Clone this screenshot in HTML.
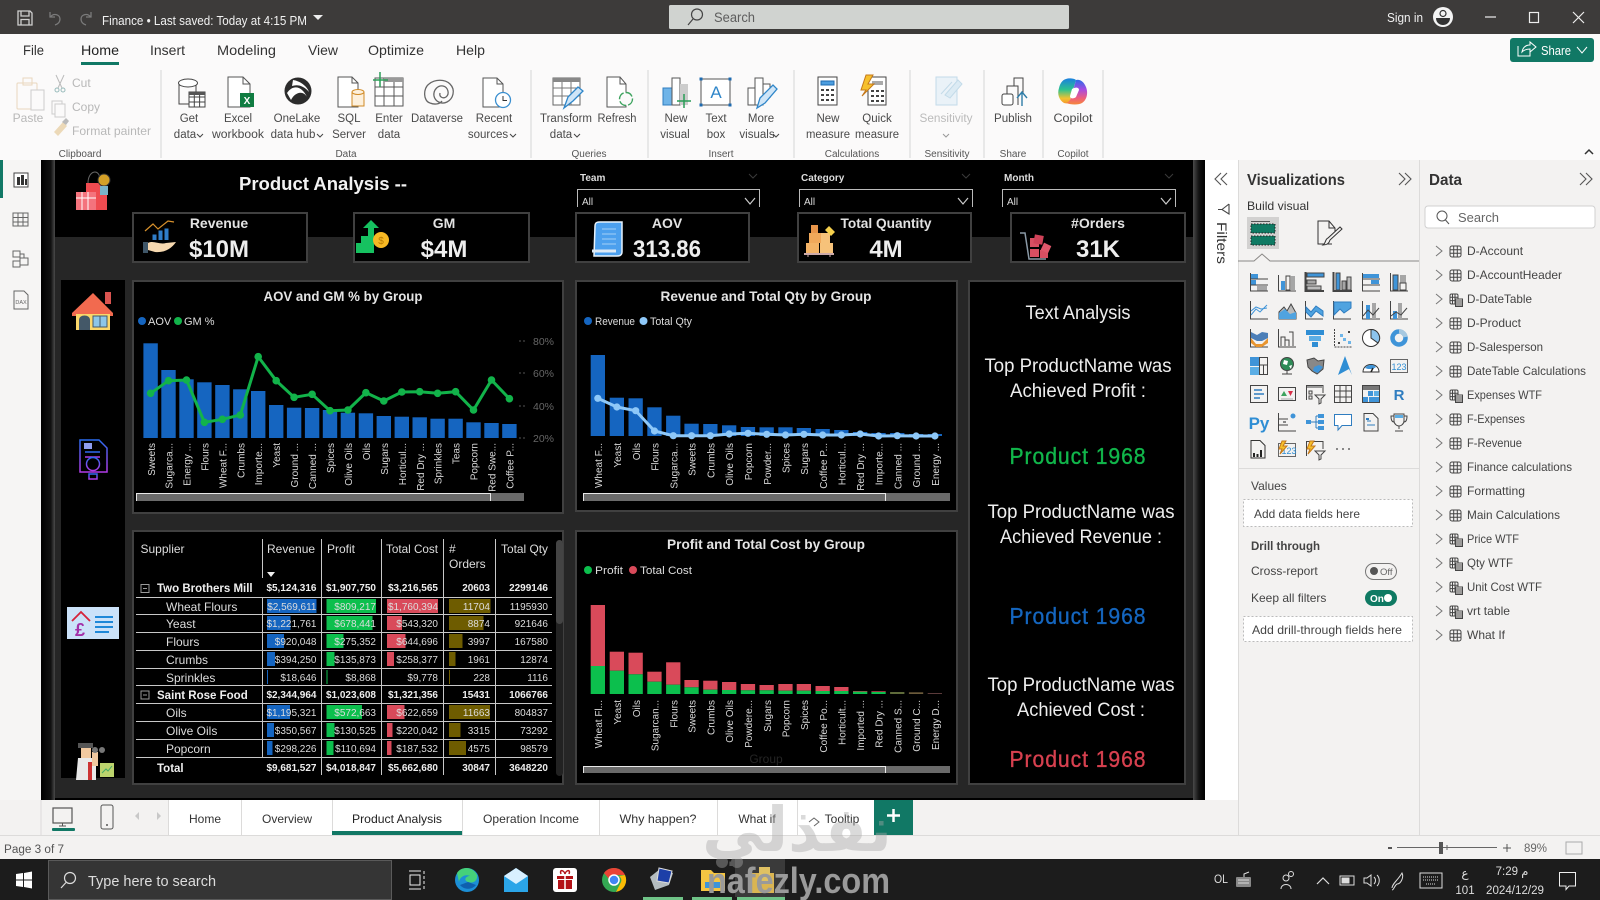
<!DOCTYPE html>
<html lang="en"><head><meta charset="utf-8"><title>Finance - Power BI</title>
<style>
html,body{margin:0;padding:0;width:1600px;height:900px;overflow:hidden;background:#f3f2f1}
svg{display:block}
text{font-family:"Liberation Sans","DejaVu Sans",sans-serif}
.mn{font-size:14px;fill:#333}
.rb{font-size:11.5px;fill:#4a4a4a;text-anchor:middle}
.gy{font-size:12px;fill:#b8b8b8}
.gl{font-size:10px;fill:#555;text-anchor:middle}
.kl{font-size:14px;font-weight:bold;fill:#e2e2e2;text-anchor:middle}
.kv{font-size:24px;font-weight:bold;fill:#eee;text-anchor:middle}
.ct{font-size:14px;font-weight:bold;fill:#e4e4e4;text-anchor:middle}
.lg{font-size:11px;fill:#ddd}
.ax{font-size:10px;fill:#d8d8d8;text-anchor:end}
.ya{font-size:10.5px;fill:#666}
.sl{font-size:10px;font-weight:bold;fill:#ddd}
.ta{font-size:19.5px;fill:#eee;text-anchor:middle}
.pr{font-size:23px;text-anchor:middle;letter-spacing:1px;stroke-width:.35px}
.th{font-size:12px;fill:#ddd}
.nm{font-size:12px;fill:#ddd}
.gn{font-size:11.5px;font-weight:bold;fill:#eee}
.n{font-size:10px;fill:#ddd;text-anchor:end}
.b{font-size:10px;font-weight:bold;fill:#eee;text-anchor:end}
.dl{font-size:12px;fill:#444}
.vp{font-size:12px;fill:#444}
.tb{font-size:12px;fill:#333;text-anchor:middle}
.tk{font-size:11.5px;fill:#ddd}
.vs{stroke:#444;fill:none;stroke-width:1}
</style></head><body>
<svg width="1600" height="900" viewBox="0 0 1600 900" xmlns="http://www.w3.org/2000/svg">
<defs>
<linearGradient id="eL" x1="0" x2="1" y1="0" y2="0"><stop offset="0" stop-color="#000"/><stop offset=".7" stop-color="#111"/><stop offset="1" stop-color="#4a4a4a"/></linearGradient>
<linearGradient id="eR" x1="0" x2="1" y1="0" y2="0"><stop offset="0" stop-color="#4a4a4a"/><stop offset=".5" stop-color="#111"/><stop offset="1" stop-color="#000"/></linearGradient>
<linearGradient id="copL" x1="0" x2="0" y1="0" y2="1"><stop offset="0" stop-color="#1a7fe0"/><stop offset=".45" stop-color="#2cc38f"/><stop offset=".8" stop-color="#f2c230"/><stop offset="1" stop-color="#f59a2e"/></linearGradient>
<linearGradient id="copR" x1="0" x2="0" y1="0" y2="1"><stop offset="0" stop-color="#2a6ce8"/><stop offset=".4" stop-color="#a84be0"/><stop offset=".75" stop-color="#ef5f7a"/><stop offset="1" stop-color="#f5883a"/></linearGradient>
<linearGradient id="nv" x1="0" x2="0" y1="0" y2="1"><stop offset="0" stop-color="#2b6cf0"/><stop offset="1" stop-color="#b23be8"/></linearGradient>
<marker id="mg" markerUnits="userSpaceOnUse" markerWidth="10" markerHeight="10" refX="5" refY="5"><circle cx="5" cy="5" r="3.8" fill="#12b34a"/></marker>
<marker id="mb" markerUnits="userSpaceOnUse" markerWidth="10" markerHeight="10" refX="5" refY="5"><circle cx="5" cy="5" r="3.6" fill="#8ec8f8"/></marker>
<symbol id="tbi" viewBox="0 0 13 13"><rect x="1" y="1" width="11" height="11" rx="2" fill="none" stroke="#444"/><path d="M4.7 1V12M8.3 1V12M1 4.7H12M1 8.3H12" stroke="#444" fill="none"/></symbol>
<symbol id="tci" viewBox="0 0 14 14"><rect x="1" y="1" width="8" height="10" rx="1.5" fill="none" stroke="#444"/><path d="M3.5 1V11M6 1V11M1 4.3H9M1 7.6H9" stroke="#444" fill="none"/><rect x="6.5" y="6" width="7" height="7.5" fill="#f3f2f1" stroke="#444"/><path d="M7 8H13M7 10H13M7 12H13" stroke="#444"/></symbol>
<symbol id="chv" viewBox="0 0 8 12"><path d="M1 1L7 6L1 11" fill="none" stroke="#777" stroke-width="1"/></symbol>
</defs>

<!-- title bar -->
<rect width="1600" height="34" fill="#3d3b3a"/>
<g fill="none" stroke="#cfcfcf" stroke-width="1.3"><path d="M18 11H30L32 13V25H18Z"/><path d="M21 11V16H29V11M21 25V19.5H29V25"/></g>
<g fill="none" stroke="#7b7b7b" stroke-width="1.3"><path d="M50 12V17H55M50.5 17C53 13 60 14 60 19C60 22 58 24 55 25"/><path d="M91 12V17H86M90.500 17C88 13 81 14 81 19C81 22 83 24 86 25"/></g>
<text x="102" y="25" font-size="13" fill="#f2f2f2" textLength="205" lengthAdjust="spacingAndGlyphs">Finance • Last saved: Today at 4:15 PM</text>
<path d="M313 15H323L318 20Z" fill="#eee"/>
<rect x="669" y="5" width="400" height="24" rx="1.500" fill="#d0d3d0"/>
<circle cx="697" cy="14.500" r="5.500" fill="none" stroke="#444" stroke-width="1.200"/><path d="M693 19L688 25" stroke="#444" stroke-width="1.200"/>
<text x="714" y="22" font-size="13.500" fill="#5e5e5e" textLength="41" lengthAdjust="spacingAndGlyphs">Search</text>
<text x="1387" y="22" font-size="12.500" fill="#f0f0f0" textLength="36" lengthAdjust="spacingAndGlyphs">Sign in</text>
<circle cx="1443" cy="17" r="10" fill="#f4f4f4"/><circle cx="1443" cy="13.500" r="3" fill="none" stroke="#333" stroke-width="1.200"/><path d="M1436 18H1450C1450 23 1446 25 1443 25C1440 25 1436 23 1436 18Z" fill="#333"/>
<path d="M1485 17H1496" stroke="#eee" stroke-width="1.200"/><rect x="1529.500" y="12.500" width="9" height="10" fill="none" stroke="#eee" stroke-width="1.200"/><path d="M1573 12L1584 23M1584 12L1573 23" stroke="#eee" stroke-width="1.200"/>

<!-- ribbon -->
<rect y="34" width="1600" height="126" fill="#fbfafa"/>
<text x="23" y="55" class="mn" textLength="21" lengthAdjust="spacingAndGlyphs">File</text>
<text x="81" y="55" class="mn" style="fill:#222" textLength="38" lengthAdjust="spacingAndGlyphs">Home</text>
<rect x="81" y="62" width="38" height="3" fill="#117865"/>
<text x="150" y="55" class="mn" textLength="35" lengthAdjust="spacingAndGlyphs">Insert</text>
<text x="217" y="55" class="mn" textLength="59" lengthAdjust="spacingAndGlyphs">Modeling</text>
<text x="308" y="55" class="mn" textLength="30" lengthAdjust="spacingAndGlyphs">View</text>
<text x="368" y="55" class="mn" textLength="56" lengthAdjust="spacingAndGlyphs">Optimize</text>
<text x="456" y="55" class="mn" textLength="29" lengthAdjust="spacingAndGlyphs">Help</text>
<rect x="1510" y="38" width="84" height="24" rx="3" fill="#117865"/>
<path d="M1518 46V56H1530V52M1522 52C1523 47 1526 45 1530 45V42L1536 47L1530 52V49C1527 49 1524 50 1522 52Z" fill="none" stroke="#fff"/>
<text x="1541" y="55" font-size="13" fill="#fff" textLength="30" lengthAdjust="spacingAndGlyphs">Share</text><path d="M1577 47L1582 53L1587 47" fill="none" stroke="#fff"/>
<g stroke="#d6d6d6"><path d="M161 70V158M531 70V158M648 70V158M794 70V158M910 70V158M984 70V158M1043 70V158M1103 70V158"/></g>
<g><text x="80" y="157" class="gl">Clipboard</text><text x="346" y="157" class="gl">Data</text><text x="589" y="157" class="gl">Queries</text><text x="721" y="157" class="gl">Insert</text><text x="852" y="157" class="gl">Calculations</text><text x="947" y="157" class="gl">Sensitivity</text><text x="1013" y="157" class="gl">Share</text><text x="1073" y="157" class="gl">Copilot</text></g>
<path d="M1585 154L1589 150L1593 154" fill="none" stroke="#333" stroke-width="1.500"/>

<!-- clipboard -->
<g fill="none" stroke="#e9d7bd"><rect x="17" y="83" width="20" height="26" rx="1"/><rect x="23" y="78" width="9" height="7"/></g><rect x="31" y="90" width="13" height="20" fill="#fbfafa" stroke="#ccc"/>
<text x="28" y="122" text-anchor="middle" class="gy">Paste</text>
<path d="M56 75L62 88M64 75L58 88" stroke="#bbb" fill="none"/><circle cx="57" cy="90" r="2" fill="none" stroke="#9bb"/><circle cx="63" cy="90" r="2" fill="none" stroke="#9bb"/>
<text x="72" y="87" class="gy">Cut</text>
<rect x="52" y="101" width="10" height="13" fill="none" stroke="#ccc"/><rect x="55" y="104" width="10" height="13" fill="#fbfafa" stroke="#ccc"/>
<text x="72" y="111" class="gy">Copy</text>
<path d="M54 132L63 122L67 126L58 136Z" fill="#ecd9b8"/><path d="M62 122L66 118L69 121L66 125Z" fill="#bbb"/>
<text x="72" y="135" class="gy" textLength="79" lengthAdjust="spacingAndGlyphs">Format painter</text>

<!-- data group icons -->
<path d="M179 83V104H196V83" fill="none" stroke="#444"/><ellipse cx="188" cy="83" rx="9.500" ry="4" fill="#fff" stroke="#444"/>
<rect x="189" y="92" width="16" height="15" fill="#fff" stroke="#444"/><path d="M189 97H205M189 102H205M194.300 92V107M199.600 92V107" stroke="#444"/><rect x="189" y="92" width="16" height="3" fill="#555"/>
<path d="M228 77H243L250 84V107H228Z" fill="#fff" stroke="#555"/><path d="M243 77V84H250" fill="none" stroke="#555"/><rect x="240" y="93" width="14" height="14" fill="#107c41"/><text x="247" y="104" font-size="10" font-weight="bold" fill="#fff" text-anchor="middle">X</text>
<circle cx="298" cy="91" r="13.500" fill="#2c2c2c"/><path d="M287 93C293 84 302 86 307 97C303 90 295 92 291 100ZM293 80C300 81 307 86 309 92C304 86 298 84 292 86Z" fill="#fff"/>
<path d="M338 77H352L358 83V107H338Z" fill="#fff" stroke="#555"/><path d="M352 77V83H358" fill="none" stroke="#555"/><path d="M352 92V106H364V92" fill="#fdf0dc" stroke="#d08a26"/><ellipse cx="358" cy="92" rx="6" ry="2.500" fill="#fdf0dc" stroke="#d08a26"/>
<rect x="375" y="78" width="28" height="28" fill="#fff" stroke="#555"/><path d="M375 87H403M375 96H403M384 78V106M394 78V106" stroke="#555"/><rect x="384" y="78" width="19" height="4" fill="#999"/><path d="M380 72V87M373 80H388" stroke="#2a9d57" stroke-width="1.500"/>
<g fill="none" stroke="#666" stroke-width="1.300"><path d="M430 103C423 101 423 88 429 84C435 79 445 79 450 84C456 90 453 99 447 102C441 105 435 101 434 96C433 90 438 85 443 86C448 87 450 94 446 97C443 99 439 97 440 93"/><path d="M430 103C435 105 440 104 442 101"/></g>
<path d="M483 78H497L503 84V107H483Z" fill="#fff" stroke="#555"/><path d="M497 78V84H503" fill="none" stroke="#555"/><circle cx="503" cy="100" r="7.500" fill="#fff" stroke="#3a8fd0" stroke-width="1.300"/><path d="M503 96V100.500H507" stroke="#333" fill="none"/>
<text x="189" y="122" class="rb">Get</text><text x="185" y="138" class="rb">data</text><path d="M197 134L200 137L203 134" fill="none" stroke="#444"/>
<text x="238" y="122" class="rb">Excel</text><text x="238" y="138" class="rb" textLength="52" lengthAdjust="spacingAndGlyphs">workbook</text>
<text x="297" y="122" class="rb">OneLake</text><text x="293" y="138" class="rb">data hub</text><path d="M317 134L320 137L323 134" fill="none" stroke="#444"/>
<text x="349" y="122" class="rb">SQL</text><text x="349" y="138" class="rb">Server</text>
<text x="389" y="122" class="rb">Enter</text><text x="389" y="138" class="rb">data</text>
<text x="437" y="122" class="rb" textLength="52" lengthAdjust="spacingAndGlyphs">Dataverse</text>
<text x="494" y="122" class="rb">Recent</text><text x="488" y="138" class="rb">sources</text><path d="M510 134L513 137L516 134" fill="none" stroke="#444"/>

<!-- queries -->
<rect x="553" y="78" width="27" height="27" fill="#fff" stroke="#666"/><rect x="553" y="78" width="27" height="4" fill="#888"/><path d="M553 88H580M553 96H580M562 82V105M571 82V105" stroke="#777"/><path d="M564 108L568 97L578 87L583 91L573 101Z" fill="#cfe5f7" stroke="#2f86c9" stroke-width="1.300"/>
<path d="M607 77H620L626 84V107H607Z" fill="#fff" stroke="#555"/><path d="M620 77V84H626" fill="none" stroke="#555"/><circle cx="626" cy="99" r="6.500" fill="#fbfafa" stroke="#3da35e" stroke-width="1.400" stroke-dasharray="8 2"/>
<text x="566" y="122" class="rb" textLength="52" lengthAdjust="spacingAndGlyphs">Transform</text><text x="561" y="138" class="rb">data</text><path d="M574 134L577 137L580 134" fill="none" stroke="#444"/>
<text x="617" y="122" class="rb" textLength="39" lengthAdjust="spacingAndGlyphs">Refresh</text>

<!-- insert -->
<rect x="663" y="88" width="9" height="17" fill="#6fb4e8" stroke="#2f7dc0"/><rect x="672" y="78" width="8" height="27" fill="#fff" stroke="#555"/><rect x="680" y="84" width="8" height="21" fill="#ccc"/><path d="M684 94V108M677 101H691" stroke="#2a9d57" stroke-width="1.500"/>
<rect x="701" y="79" width="29" height="26" fill="#fff" stroke="#555"/><g fill="#1e6bb0"><rect x="699.500" y="77.500" width="3" height="3"/><rect x="728.500" y="77.500" width="3" height="3"/><rect x="699.500" y="103.500" width="3" height="3"/><rect x="728.500" y="103.500" width="3" height="3"/></g><text x="716" y="98" font-size="17" fill="#2f86c9" text-anchor="middle">A</text>
<path d="M748 88H755V105H748ZM755 78H763V105H755ZM763 84H770V98" fill="#fff" stroke="#555"/><path d="M757 108L760 98L773 85L777 89L765 103Z" fill="#cfe5f7" stroke="#2f86c9" stroke-width="1.300"/>
<text x="676" y="122" class="rb">New</text><text x="675" y="138" class="rb">visual</text>
<text x="716" y="122" class="rb">Text</text><text x="716" y="138" class="rb">box</text>
<text x="761" y="122" class="rb">More</text><text x="757" y="138" class="rb">visuals</text><path d="M773 134L776 137L779 134" fill="none" stroke="#444"/>

<!-- calc -->
<rect x="818" y="77" width="19" height="28" fill="#fff" stroke="#444"/><rect x="821" y="81" width="13" height="4" fill="#4c9ee0" stroke="#1e6bb0"/><g fill="#444"><path d="M821 89h3v2h-3zM826 89h3v2h-3zM831 89h3v2h-3zM821 94h3v2h-3zM826 94h3v2h-3zM831 94h3v2h-3zM821 99h3v2h-3zM826 99h3v2h-3zM831 99h3v2h-3z"/></g>
<rect x="868" y="77" width="18" height="28" fill="#fff" stroke="#444"/><rect x="872" y="81" width="11" height="4" fill="#aaa"/><g fill="#444"><path d="M871 90h3v2h-3zM876 90h3v2h-3zM881 90h3v2h-3zM871 95h3v2h-3zM876 95h3v2h-3zM881 95h3v2h-3zM871 100h3v2h-3zM876 100h3v2h-3zM881 100h3v2h-3z"/></g>
<path d="M866 75L861 90H866L862 96L874 84H868L873 75Z" fill="#f6c02c" stroke="#c4781a"/>
<text x="828" y="122" class="rb">New</text><text x="828" y="138" class="rb" textLength="44" lengthAdjust="spacingAndGlyphs">measure</text><text x="877" y="122" class="rb">Quick</text><text x="877" y="138" class="rb" textLength="44" lengthAdjust="spacingAndGlyphs">measure</text>
<!-- sensitivity -->
<rect x="936" y="77" width="21" height="28" fill="#eaf2f8" stroke="#c3dbe9"/><path d="M945 95L958 80L962 84L950 98ZM941 94L952 82" stroke="#c3dbe9" fill="#dcebf4"/>
<text x="946" y="122" class="rb" style="fill:#bbb" textLength="53" lengthAdjust="spacingAndGlyphs">Sensitivity</text><path d="M943 134L946 137L949 134" fill="none" stroke="#999"/>
<!-- publish -->
<rect x="1002" y="94" width="11" height="11" rx="2" fill="#fff" stroke="#444"/><path d="M1007 94V86H1018V105M1014 86V78H1023V93" fill="none" stroke="#444"/><path d="M1022 106V93M1017 98L1022 92L1027 98" fill="none" stroke="#2f7da8" stroke-width="1.400"/>
<text x="1013" y="122" class="rb" textLength="38" lengthAdjust="spacingAndGlyphs">Publish</text>
<!-- copilot -->
<path d="M1066 79C1068 78 1074 78 1076 80L1070 100C1069 103 1067 104 1064 103C1059 100 1057 94 1059 88C1060 84 1062 80 1066 79Z" fill="url(#copL)"/>
<path d="M1076 80C1079 79 1083 81 1085 85C1089 92 1087 100 1082 103C1079 105 1071 105 1066 103C1070 102 1071 98 1072 94Z" fill="url(#copR)"/>
<path d="M1072 89C1075 87 1079 87 1079 90L1076 97C1074 99 1070 99 1070 96Z" fill="#fff"/>
<text x="1073" y="122" class="rb" textLength="39" lengthAdjust="spacingAndGlyphs">Copilot</text>

<!-- left rail -->
<rect y="160" width="41" height="640" fill="#f6f5f4"/>
<rect y="160" width="3" height="38" fill="#117865"/>
<g fill="none" stroke="#444"><rect x="14" y="173" width="14" height="14" fill="#fff"/></g><path d="M17 185V177H20V185ZM21 185V175H24V185ZM25 185V179H27V185Z" fill="#333"/>
<g fill="none" stroke="#666"><rect x="13" y="213" width="15" height="13"/><path d="M13 217.500H28M13 222H28M18 213V226M23 213V226"/>
<rect x="13" y="251" width="7" height="6"/><rect x="20" y="258" width="8" height="7"/><rect x="13" y="261" width="7" height="6"/><path d="M20 254H24V258"/>
<path d="M14 291H24L28 295V309H14Z"/></g><text x="21" y="304" font-size="5.500" fill="#666" text-anchor="middle">DAX</text>

<!-- canvas -->
<rect x="41" y="160" width="1164" height="640" fill="#000"/>
<rect x="41" y="160" width="14" height="640" fill="url(#eL)"/>
<rect x="1193" y="160" width="12" height="640" fill="url(#eR)"/>
<rect x="55" y="237" width="1138" height="561" fill="#262626"/>

<!-- nav column -->
<rect x="61" y="280" width="64" height="498" fill="#000"/>
<!-- gift header -->
<g><path d="M86 183H107V210H76V192H86Z" fill="#ef4b50"/><rect x="76" y="192" width="20" height="18" fill="#f4737d"/><path d="M76 198H96M82 192V210M88 192V210" stroke="#fff" stroke-width="1"/><path d="M88 183C88 170 100 168 100 180" fill="none" stroke="#666"/><circle cx="104" cy="180" r="6" fill="#d4a027" stroke="#333"/><rect x="100" y="186" width="8" height="9" fill="#7ab3c9"/></g>
<!-- home -->
<path d="M72 313L93 293L113 313L113 316H72Z" fill="#f26a4f"/><rect x="105" y="292" width="6" height="12" fill="#d9534f"/><rect x="76" y="314" width="34" height="16" fill="#fbd76a"/><path d="M79 330V320C79 314 90 314 90 320V330Z" fill="#445868"/><rect x="93" y="316" width="14" height="11" fill="#8dc6e8" stroke="#445868"/><path d="M100 316V327" stroke="#445868"/>
<!-- rupee doc -->
<g fill="none" stroke="url(#nv)" stroke-width="1.500"><path d="M80 440H99L107 448V472H80Z"/><path d="M85 452H100M85 457H100"/><circle cx="93" cy="464" r="6.500"/><path d="M89 474H97V479H89Z"/></g><rect x="84" y="443" width="8" height="6" fill="#8f9ef0"/>
<!-- pound -->
<rect x="67" y="607" width="52" height="32" fill="#cbe2f9"/><path d="M72 621L81 612L90 621" fill="none" stroke="#d6223a" stroke-width="1.800"/><text x="80" y="636" font-size="18" fill="#a32fa8" text-anchor="middle" font-weight="bold">£</text><path d="M95 617H113M95 622H113M95 627H113M95 632H109" stroke="#1e88d8" stroke-width="2"/>
<!-- person -->
<path d="M78 743H93V748H78Z" fill="#555"/><rect x="81" y="748" width="10" height="10" fill="#f1c9a0"/><path d="M78 758H96V780H76Z" fill="#e9e9e9"/><rect x="88" y="762" width="4" height="18" fill="#c33"/><rect x="92" y="752" width="6" height="14" fill="#f1c9a0"/><circle cx="95" cy="750" r="3" fill="#777"/><circle cx="102" cy="750" r="3" fill="#777"/><rect x="100" y="763" width="14" height="14" fill="#bcd36d"/><path d="M102 773L106 769L108 771L112 766" stroke="#4a6" fill="none"/>

<!-- title -->
<text x="323" y="190" font-size="18" font-weight="bold" fill="#f2f2f2" text-anchor="middle" textLength="168" lengthAdjust="spacingAndGlyphs">Product Analysis --</text>

<!-- slicers -->
<g>
<text x="580" y="181" class="sl">Team</text><text x="801" y="181" class="sl">Category</text><text x="1004" y="181" class="sl">Month</text>
<g fill="none" stroke="#3a3a3a"><path d="M749 174L753 178L757 174M962 174L966 178L970 174M1165 174L1169 178L1173 174"/></g>
<g fill="none" stroke="#bbb"><path d="M577.500 207V189.500H759.500V207M799.500 207V189.500H972.500V207M1002.500 207V189.500H1175.500V207"/></g>
<g><text x="582" y="205" font-size="10" fill="#ddd">All</text><text x="804" y="205" font-size="10" fill="#ddd">All</text><text x="1007" y="205" font-size="10" fill="#ddd">All</text></g>
<g fill="none" stroke="#ccc" stroke-width="1.200"><path d="M745 198L750 204L755 198M958 198L963 204L968 198M1161 198L1166 204L1171 198"/></g>
</g>

<!-- kpi cards -->
<g fill="#000" stroke="#404040" stroke-width="2"><rect x="133" y="213" width="174" height="49"/><rect x="354" y="213" width="175" height="49"/><rect x="576" y="213" width="173" height="49"/><rect x="798" y="213" width="173" height="49"/><rect x="1011" y="213" width="174" height="49"/></g>
<text x="219" y="228" class="kl">Revenue</text><text x="219" y="257" class="kv">$10M</text>
<text x="444" y="228" class="kl">GM</text><text x="444" y="257" class="kv">$4M</text>
<text x="667" y="228" class="kl">AOV</text><text x="667" y="257" class="kv" textLength="68" lengthAdjust="spacingAndGlyphs">313.86</text>
<text x="886" y="228" class="kl" textLength="91" lengthAdjust="spacingAndGlyphs">Total Quantity</text><text x="886" y="257" class="kv">4M</text>
<text x="1098" y="228" class="kl" textLength="54" lengthAdjust="spacingAndGlyphs">#Orders</text><text x="1098" y="257" class="kv">31K</text>
<!-- kpi icons -->
<path d="M145 231L153 224L158 229L168 221L174 222" fill="none" stroke="#d8912c" stroke-width="1.200"/><path d="M153 240V235H156V240M159 240V231H162V240M165 240V229H168V240" stroke="#2f7dc8" fill="#2f7dc8"/><path d="M148 243C153 240 160 245 166 243L176 242C172 248 165 253 155 252L148 250Z" fill="#f7d9b0"/><rect x="143" y="242" width="5" height="11" fill="#3f5668"/>
<path d="M356 253V243H361V236H368V228H363L371 220L379 228H374V253Z" fill="#16c160"/><circle cx="381" cy="240" r="8" fill="#f7b924"/><text x="381" y="244" font-size="10" fill="#b97b00" text-anchor="middle">$</text>
<path d="M595 226C595 222 598 222 600 222H622V252C622 255 620 256 617 256H594Z" fill="#4ca0ee" stroke="#e8f2fb" stroke-width="1.500"/><path d="M592 251H616" stroke="#dce9f5" stroke-width="3"/><path d="M602 229H616M602 234H616M602 239H616M602 244H616" stroke="#a5d0f7"/>
<rect x="806" y="243" width="13" height="10" fill="#f3b366"/><rect x="820" y="243" width="13" height="10" fill="#f6c27a"/><rect x="809" y="233" width="12" height="10" fill="#f0a85a"/><rect x="821" y="233" width="9" height="10" fill="#f6c27a"/><rect x="811" y="225" width="7" height="8" fill="#e8954a"/><path d="M829 226L835 232L831 236L825 230Z" fill="#f6d04d"/><rect x="804" y="253" width="30" height="2" fill="#caa"/><path d="M808 255V257M830 255V257" stroke="#caa"/>
<path d="M1020 233H1025L1029 259H1046" fill="none" stroke="#8a99a6" stroke-width="1.500"/><rect x="1030" y="238" width="9" height="9" fill="#d84f62"/><rect x="1034" y="235" width="9" height="9" fill="#cf4258" transform="rotate(10 1038 240)"/><rect x="1030" y="249" width="9" height="8" fill="#d84f62"/><rect x="1040" y="250" width="8" height="8" fill="#d84f62"/><rect x="1042" y="244" width="8" height="8" fill="#e0576a" transform="rotate(25 1046 248)"/>

<!-- panels -->
<g fill="#000" stroke="#404040" stroke-width="2"><rect x="133" y="281" width="430" height="232"/><rect x="576" y="281" width="381" height="230"/><rect x="969" y="281" width="216" height="503"/><rect x="133" y="531" width="430" height="253"/><rect x="576" y="531" width="381" height="253"/></g>

<!-- chart 1 -->
<text x="343" y="301" class="ct" textLength="159" lengthAdjust="spacingAndGlyphs">AOV and GM % by Group</text>
<circle cx="142" cy="321" r="4" fill="#1565c0"/><text x="148" y="325" class="lg">AOV</text><circle cx="178" cy="321" r="4" fill="#12b34a"/><text x="184" y="325" class="lg">GM %</text>
<g fill="#1565c0"><rect x="143.400" y="343.300" width="14.400" height="94.700"/><rect x="161.300" y="370" width="14.400" height="68"/><rect x="179.300" y="379.300" width="14.400" height="58.700"/><rect x="197.200" y="382.300" width="14.400" height="55.700"/><rect x="215.200" y="385" width="14.400" height="53"/><rect x="233.100" y="389.300" width="14.400" height="48.700"/><rect x="251" y="391" width="14.400" height="47"/><rect x="269" y="405" width="14.400" height="33"/><rect x="286.900" y="407.700" width="14.400" height="30.300"/><rect x="304.900" y="408" width="14.400" height="30"/><rect x="322.800" y="410" width="14.400" height="28"/><rect x="340.700" y="412.700" width="14.400" height="25.300"/><rect x="358.700" y="413.300" width="14.400" height="24.700"/><rect x="376.600" y="416" width="14.400" height="22"/><rect x="394.600" y="416.700" width="14.400" height="21.300"/><rect x="412.500" y="417.300" width="14.400" height="20.700"/><rect x="430.400" y="418.700" width="14.400" height="19.300"/><rect x="448.400" y="418.700" width="14.400" height="19.300"/><rect x="466.300" y="422.300" width="14.400" height="15.700"/><rect x="484.300" y="423" width="14.400" height="15"/><rect x="502.200" y="424" width="14.400" height="14"/></g>
<polyline fill="none" stroke="#12b34a" stroke-width="3" marker-start="url(#mg)" marker-mid="url(#mg)" marker-end="url(#mg)" points="150.600,393.300 168.500,380.700 186.500,380 204.400,422.300 222.400,419.300 240.300,415 258.200,356.700 276.200,380.700 294.100,397.300 312.100,394.300 330,410.700 347.900,410 365.900,392.700 383.800,401 401.800,392 419.700,391.700 437.600,393.300 455.600,391.700 473.500,410 491.500,380 509.400,398.700"/>
<g><text x="533" y="345" class="ya">80%</text><text x="533" y="377" class="ya">60%</text><text x="533" y="410" class="ya">40%</text><text x="533" y="442" class="ya">20%</text></g>
<path d="M519 341H521M523 341H525M519 373H521M523 373H525M519 406H521M523 406H525M519 438H521M523 438H525" stroke="#555"/>
<g>
<text class="ax" transform="translate(155,443) rotate(-90)">Sweets</text><text class="ax" transform="translate(172.500,443) rotate(-90)">Sugarca...</text><text class="ax" transform="translate(190.500,443) rotate(-90)">Energy ...</text><text class="ax" transform="translate(208.500,443) rotate(-90)">Flours</text><text class="ax" transform="translate(226.500,443) rotate(-90)">Wheat F...</text><text class="ax" transform="translate(244.500,443) rotate(-90)">Crumbs</text><text class="ax" transform="translate(262,443) rotate(-90)">Importe...</text><text class="ax" transform="translate(280,443) rotate(-90)">Yeast</text><text class="ax" transform="translate(298,443) rotate(-90)">Ground ...</text><text class="ax" transform="translate(316,443) rotate(-90)">Canned ...</text><text class="ax" transform="translate(334,443) rotate(-90)">Spices</text><text class="ax" transform="translate(352,443) rotate(-90)">Olive Oils</text><text class="ax" transform="translate(370,443) rotate(-90)">Oils</text><text class="ax" transform="translate(388,443) rotate(-90)">Sugars</text><text class="ax" transform="translate(406,443) rotate(-90)">Horticul...</text><text class="ax" transform="translate(424,443) rotate(-90)">Red Dry ...</text><text class="ax" transform="translate(441.500,443) rotate(-90)">Sprinkles</text><text class="ax" transform="translate(459.500,443) rotate(-90)">Teas</text><text class="ax" transform="translate(477.500,443) rotate(-90)">Popcorn</text><text class="ax" transform="translate(495.500,443) rotate(-90)">Red Swe...</text><text class="ax" transform="translate(513.500,443) rotate(-90)">Coffee P...</text>
</g>
<rect x="136" y="493" width="388" height="8" fill="#6a6a6a"/><path d="M136.500 501V493.500H490.500V501" fill="none" stroke="#e8e8e8"/>

<!-- chart 2 -->
<text x="766" y="301" class="ct" textLength="211" lengthAdjust="spacingAndGlyphs">Revenue and Total Qty by Group</text>
<circle cx="588" cy="321" r="4" fill="#1565c0"/><text x="595" y="325" class="lg" textLength="40" lengthAdjust="spacingAndGlyphs">Revenue</text><circle cx="643.500" cy="321" r="4" fill="#8ec8f8"/><text x="650" y="325" class="lg" textLength="42" lengthAdjust="spacingAndGlyphs">Total Qty</text>
<g fill="#1565c0"><rect x="590.700" y="355" width="14.300" height="81"/><rect x="609.700" y="397.700" width="14.300" height="38.300"/><rect x="628.500" y="398.300" width="14.300" height="37.700"/><rect x="647.300" y="407.300" width="14.300" height="28.700"/><rect x="666.100" y="415.700" width="14.300" height="20.300"/><rect x="684.400" y="423.700" width="14.300" height="12.300"/><rect x="703.200" y="424" width="14.300" height="12"/><rect x="722" y="425.300" width="14.300" height="10.700"/><rect x="740.800" y="427" width="14.300" height="9"/><rect x="759.500" y="427.300" width="14.300" height="8.700"/><rect x="778.300" y="427.300" width="14.300" height="8.700"/><rect x="796.700" y="428" width="14.300" height="8"/><rect x="815.500" y="429" width="14.300" height="7"/><rect x="834.200" y="430" width="14.300" height="6"/><rect x="853" y="432" width="14.300" height="4"/><rect x="871.400" y="433" width="14.300" height="3"/><rect x="890.100" y="433" width="14.300" height="3"/><rect x="908.900" y="434" width="14.300" height="2"/><rect x="927.700" y="434" width="14.300" height="2"/></g>
<polyline fill="none" stroke="#8ec8f8" stroke-width="3" marker-start="url(#mb)" marker-mid="url(#mb)" marker-end="url(#mb)" points="597.800,398.300 616.900,407 635.700,410.700 654.500,431 673.300,435.700 691.600,435.700 710.400,435.700 729.200,434 748,433.300 766.700,434.300 785.500,435 803.900,434.300 822.700,435 841.400,435 860.200,434 878.600,436 897.300,435.700 916.100,436 934.900,436"/>
<g>
<text class="ax" transform="translate(602,443) rotate(-90)">Wheat F...</text><text class="ax" transform="translate(621,443) rotate(-90)">Yeast</text><text class="ax" transform="translate(640,443) rotate(-90)">Oils</text><text class="ax" transform="translate(658.500,443) rotate(-90)">Flours</text><text class="ax" transform="translate(677.500,443) rotate(-90)">Sugarca...</text><text class="ax" transform="translate(695.500,443) rotate(-90)">Sweets</text><text class="ax" transform="translate(714.500,443) rotate(-90)">Crumbs</text><text class="ax" transform="translate(733,443) rotate(-90)">Olive Oils</text><text class="ax" transform="translate(752,443) rotate(-90)">Popcorn</text><text class="ax" transform="translate(771,443) rotate(-90)">Powder...</text><text class="ax" transform="translate(789.500,443) rotate(-90)">Spices</text><text class="ax" transform="translate(808,443) rotate(-90)">Sugars</text><text class="ax" transform="translate(827,443) rotate(-90)">Coffee P...</text><text class="ax" transform="translate(845.500,443) rotate(-90)">Horticul...</text><text class="ax" transform="translate(864,443) rotate(-90)">Red Dry ...</text><text class="ax" transform="translate(882.500,443) rotate(-90)">Importe...</text><text class="ax" transform="translate(901.500,443) rotate(-90)">Canned ...</text><text class="ax" transform="translate(920,443) rotate(-90)">Ground ...</text><text class="ax" transform="translate(939,443) rotate(-90)">Energy ...</text>
</g>
<rect x="583" y="493" width="367" height="8" fill="#6a6a6a"/><path d="M583.500 501V493.500H885.500V501" fill="none" stroke="#e8e8e8"/>

<!-- chart 3 -->
<text x="766" y="549" class="ct" textLength="198" lengthAdjust="spacingAndGlyphs">Profit and Total Cost by Group</text>
<circle cx="588" cy="570" r="4" fill="#0cbf4d"/><text x="595" y="574" class="lg" textLength="28" lengthAdjust="spacingAndGlyphs">Profit</text><circle cx="633" cy="570" r="4" fill="#d94a5a"/><text x="640" y="574" class="lg" textLength="52" lengthAdjust="spacingAndGlyphs">Total Cost</text>
<g fill="#d94a5a"><rect x="590.700" y="605" width="14.300" height="61"/><rect x="609.700" y="651.700" width="14.300" height="19"/><rect x="628.500" y="652.700" width="14.300" height="21.600"/><rect x="647.300" y="671.700" width="14.300" height="10"/><rect x="666.100" y="662.300" width="14.300" height="22.400"/><rect x="684.400" y="680" width="14.300" height="7.300"/><rect x="703.200" y="680.700" width="14.300" height="9"/><rect x="722" y="682" width="14.300" height="8"/><rect x="740.800" y="684" width="14.300" height="6.300"/><rect x="759.500" y="685" width="14.300" height="5.300"/><rect x="778.300" y="684" width="14.300" height="6.700"/><rect x="796.700" y="684" width="14.300" height="6.700"/><rect x="815.500" y="686" width="14.300" height="5"/><rect x="834.200" y="687" width="14.300" height="4"/><rect x="853" y="691" width="14.300" height=".7"/><rect x="871.400" y="691.300" width="14.300" height=".7"/></g>
<g fill="#0cbf4d"><rect x="590.700" y="666" width="14.300" height="28"/><rect x="609.700" y="670.700" width="14.300" height="23.300"/><rect x="628.500" y="674.300" width="14.300" height="19.700"/><rect x="647.300" y="681.700" width="14.300" height="12.300"/><rect x="666.100" y="684.700" width="14.300" height="9.300"/><rect x="684.400" y="687.300" width="14.300" height="6.700"/><rect x="703.200" y="689.700" width="14.300" height="4.300"/><rect x="722" y="690" width="14.300" height="4"/><rect x="740.800" y="690.300" width="14.300" height="3.700"/><rect x="759.500" y="690.300" width="14.300" height="3.700"/><rect x="778.300" y="690.700" width="14.300" height="3.300"/><rect x="796.700" y="690.700" width="14.300" height="3.300"/><rect x="815.500" y="691" width="14.300" height="3"/><rect x="834.200" y="691" width="14.300" height="3"/><rect x="853" y="691.700" width="14.300" height="2.300"/><rect x="871.400" y="692" width="14.300" height="2"/></g>
<rect x="890.100" y="692" width="14.300" height="2" fill="#5f6b3a"/><rect x="908.900" y="692.300" width="14.300" height="1.700" fill="#6b5a3a"/><rect x="927.700" y="693" width="14.300" height="1" fill="#5a3a3a"/>
<g>
<text class="ax" transform="translate(602,700) rotate(-90)">Wheat Fl...</text><text class="ax" transform="translate(621,700) rotate(-90)">Yeast</text><text class="ax" transform="translate(640,700) rotate(-90)">Oils</text><text class="ax" transform="translate(658.500,700) rotate(-90)">Sugarcan...</text><text class="ax" transform="translate(677.500,700) rotate(-90)">Flours</text><text class="ax" transform="translate(695.500,700) rotate(-90)">Sweets</text><text class="ax" transform="translate(714.500,700) rotate(-90)">Crumbs</text><text class="ax" transform="translate(733,700) rotate(-90)">Olive Oils</text><text class="ax" transform="translate(752,700) rotate(-90)">Powdere...</text><text class="ax" transform="translate(771,700) rotate(-90)">Sugars</text><text class="ax" transform="translate(789.500,700) rotate(-90)">Popcorn</text><text class="ax" transform="translate(808,700) rotate(-90)">Spices</text><text class="ax" transform="translate(827,700) rotate(-90)">Coffee Po...</text><text class="ax" transform="translate(845.500,700) rotate(-90)">Horticult...</text><text class="ax" transform="translate(864,700) rotate(-90)">Imported ...</text><text class="ax" transform="translate(882.500,700) rotate(-90)">Red Dry ...</text><text class="ax" transform="translate(901.500,700) rotate(-90)">Canned S...</text><text class="ax" transform="translate(920,700) rotate(-90)">Ground C...</text><text class="ax" transform="translate(939,700) rotate(-90)">Energy D...</text>
</g>
<text x="766" y="763" font-size="12" fill="#252525" text-anchor="middle">Group</text>
<rect x="583" y="766" width="367" height="7" fill="#6a6a6a"/><path d="M583.500 773V766.500H885.500V773" fill="none" stroke="#e8e8e8"/>

<!-- text analysis -->
<text x="1078" y="319" class="ta" textLength="105" lengthAdjust="spacingAndGlyphs">Text Analysis</text>
<text x="1078" y="372" class="ta" textLength="187" lengthAdjust="spacingAndGlyphs">Top ProductName was</text>
<text x="1078" y="397" class="ta" textLength="136" lengthAdjust="spacingAndGlyphs">Achieved Profit :</text>
<text x="1078" y="464" class="pr" fill="#11b64b" stroke="#11b64b" textLength="137" lengthAdjust="spacingAndGlyphs">Product 1968</text>
<text x="1081" y="518" class="ta" textLength="187" lengthAdjust="spacingAndGlyphs">Top ProductName was</text>
<text x="1081" y="543" class="ta" textLength="162" lengthAdjust="spacingAndGlyphs">Achieved Revenue :</text>
<text x="1078" y="624" class="pr" fill="#1566bf" stroke="#1566bf" textLength="137" lengthAdjust="spacingAndGlyphs">Product 1968</text>
<text x="1081" y="691" class="ta" textLength="187" lengthAdjust="spacingAndGlyphs">Top ProductName was</text>
<text x="1081" y="716" class="ta" textLength="128" lengthAdjust="spacingAndGlyphs">Achieved Cost :</text>
<text x="1078" y="767" class="pr" fill="#d7404f" stroke="#d7404f" textLength="137" lengthAdjust="spacingAndGlyphs">Product 1968</text>

<!-- table -->
<g>
<g fill="#1565c0"><rect x="267" y="599" width="49.500" height="14"/><rect x="267" y="616" width="23.500" height="14"/><rect x="267" y="634" width="17" height="14"/><rect x="267" y="652" width="8" height="14"/><rect x="267" y="670" width="1" height="14"/><rect x="267" y="705" width="23" height="14"/><rect x="267" y="723" width="7" height="14"/><rect x="267" y="741" width="5.500" height="14"/></g>
<g fill="#0cbf4d"><rect x="326.500" y="599" width="49.500" height="14"/><rect x="326.500" y="616" width="46" height="14"/><rect x="326.500" y="634" width="17" height="14"/><rect x="326.500" y="652" width="8" height="14"/><rect x="326.500" y="670" width="1" height="14"/><rect x="326.500" y="705" width="35.500" height="14"/><rect x="326.500" y="723" width="8" height="14"/><rect x="326.500" y="741" width="7" height="14"/></g>
<g fill="#d94a5a"><rect x="387" y="599" width="51" height="14"/><rect x="387" y="616" width="15" height="14"/><rect x="387" y="634" width="18.500" height="14"/><rect x="387" y="652" width="7" height="14"/><rect x="387" y="705" width="17.500" height="14"/><rect x="387" y="723" width="5.500" height="14"/><rect x="387" y="741" width="4.500" height="14"/></g>
<g fill="#6e5c00"><rect x="449" y="599" width="41.500" height="14"/><rect x="449" y="616" width="34.500" height="14"/><rect x="449" y="634" width="13.500" height="14"/><rect x="449" y="652" width="6.500" height="14"/><rect x="449" y="670" width="1" height="14"/><rect x="449" y="705" width="41" height="14"/><rect x="449" y="723" width="11.500" height="14"/><rect x="449" y="741" width="17" height="14"/></g>
<g stroke="#c8c8c8" stroke-width="1"><path d="M136 597.500H552M136 614.500H552M136 632.500H552M136 650.500H552M136 668.500H552M136 685.500H552M136 703.500H552M136 721.500H552M136 739.500H552M136 757.500H552"/><path d="M262.500 539V578M262.500 597V757M321.500 539V775M381.500 539V775M443.500 539V775M495.500 539V775"/></g>
<text x="140.500" y="553" class="th">Supplier</text><text x="267" y="553" class="th">Revenue</text><text x="327" y="553" class="th">Profit</text><text x="386" y="553" class="th" textLength="52" lengthAdjust="spacingAndGlyphs">Total Cost</text><text x="449" y="553" class="th">#</text><text x="449" y="568" class="th">Orders</text><text x="501" y="553" class="th" textLength="47" lengthAdjust="spacingAndGlyphs">Total Qty</text>
<path d="M267 572H275L271 577Z" fill="#eee"/>
<rect x="141" y="584.500" width="8" height="8" fill="none" stroke="#999"/><path d="M143 588.500H147" stroke="#999"/>
<rect x="141" y="691" width="8" height="8" fill="none" stroke="#999"/><path d="M143 695H147" stroke="#999"/>
<text x="157" y="592" class="gn">Two Brothers Mill</text><text x="166" y="611" class="nm">Wheat Flours</text><text x="166" y="628" class="nm">Yeast</text><text x="166" y="646" class="nm">Flours</text><text x="166" y="664" class="nm">Crumbs</text><text x="166" y="682" class="nm">Sprinkles</text><text x="157" y="699" class="gn">Saint Rose Food</text><text x="166" y="717" class="nm">Oils</text><text x="166" y="735" class="nm">Olive Oils</text><text x="166" y="753" class="nm">Popcorn</text><text x="157" y="772" class="gn">Total</text>
<g>
<text x="316.500" y="591" class="b">$5,124,316</text><text x="376" y="591" class="b">$1,907,750</text><text x="438" y="591" class="b">$3,216,565</text><text x="490" y="591" class="b">20603</text><text x="548" y="591" class="b">2299146</text>
<text x="316.500" y="610" class="n">$2,569,611</text><text x="376" y="610" class="n">$809,217</text><text x="438" y="610" class="n">$1,760,394</text><text x="490" y="610" class="n">11704</text><text x="548" y="610" class="n">1195930</text>
<text x="316.500" y="627" class="n">$1,221,761</text><text x="376" y="627" class="n">$678,441</text><text x="438" y="627" class="n">$543,320</text><text x="490" y="627" class="n">8874</text><text x="548" y="627" class="n">921646</text>
<text x="316.500" y="645" class="n">$920,048</text><text x="376" y="645" class="n">$275,352</text><text x="438" y="645" class="n">$644,696</text><text x="490" y="645" class="n">3997</text><text x="548" y="645" class="n">167580</text>
<text x="316.500" y="663" class="n">$394,250</text><text x="376" y="663" class="n">$135,873</text><text x="438" y="663" class="n">$258,377</text><text x="490" y="663" class="n">1961</text><text x="548" y="663" class="n">12874</text>
<text x="316.500" y="681" class="n">$18,646</text><text x="376" y="681" class="n">$8,868</text><text x="438" y="681" class="n">$9,778</text><text x="490" y="681" class="n">228</text><text x="548" y="681" class="n">1116</text>
<text x="316.500" y="698" class="b">$2,344,964</text><text x="376" y="698" class="b">$1,023,608</text><text x="438" y="698" class="b">$1,321,356</text><text x="490" y="698" class="b">15431</text><text x="548" y="698" class="b">1066766</text>
<text x="316.500" y="716" class="n">$1,195,321</text><text x="376" y="716" class="n">$572,663</text><text x="438" y="716" class="n">$622,659</text><text x="490" y="716" class="n">11663</text><text x="548" y="716" class="n">804837</text>
<text x="316.500" y="734" class="n">$350,567</text><text x="376" y="734" class="n">$130,525</text><text x="438" y="734" class="n">$220,042</text><text x="490" y="734" class="n">3315</text><text x="548" y="734" class="n">73292</text>
<text x="316.500" y="752" class="n">$298,226</text><text x="376" y="752" class="n">$110,694</text><text x="438" y="752" class="n">$187,532</text><text x="490" y="752" class="n">4575</text><text x="548" y="752" class="n">98579</text>
<text x="316.500" y="771" class="b">$9,681,527</text><text x="376" y="771" class="b">$4,018,847</text><text x="438" y="771" class="b">$5,662,680</text><text x="490" y="771" class="b">30847</text><text x="548" y="771" class="b">3648220</text>
</g>
<rect x="556" y="540" width="7" height="236" rx="3.500" fill="#222"/><rect x="556" y="540" width="7" height="84" rx="3.500" fill="#444"/>
</g>

<!-- filters strip -->
<rect x="1205" y="160" width="33" height="640" fill="#fff"/>
<path d="M1221 173L1215 179L1221 185M1227 173L1221 179L1227 185" fill="none" stroke="#555" stroke-width="1.100"/>
<path d="M1229 204V214L1222 209.500H1218M1222 209.500L1229 204" fill="none" stroke="#444" stroke-width="1.100"/>
<text transform="translate(1217,222) rotate(90)" font-size="14" fill="#333" textLength="42" lengthAdjust="spacingAndGlyphs">Filters</text>

<!-- right panels -->
<rect x="1238" y="160" width="181" height="675" fill="#f3f2f1"/><rect x="1419" y="160" width="181" height="675" fill="#f3f2f1"/>
<path d="M1238.500 160V835M1419.500 160V835" stroke="#dcdbda"/>
<text x="1247" y="185" font-size="16" font-weight="bold" fill="#333" textLength="98" lengthAdjust="spacingAndGlyphs">Visualizations</text>
<path d="M1399 173L1405 179L1399 185M1405 173L1411 179L1405 185" fill="none" stroke="#555" stroke-width="1.100"/>
<text x="1247" y="210" font-size="12" fill="#333" textLength="62" lengthAdjust="spacingAndGlyphs">Build visual</text>
<rect x="1247" y="217" width="32" height="32" fill="#d2d1d0"/><rect x="1251" y="224" width="24" height="9" fill="#0f7a63" stroke="#222" stroke-dasharray="1.500 1.500"/><rect x="1251" y="236" width="24" height="9" fill="#0f7a63" stroke="#222" stroke-dasharray="1.500 1.500"/><path d="M1251 221.500H1270" stroke="#555"/>
<path d="M1332 244H1318V221H1329L1335 228V232" fill="none" stroke="#333"/><path d="M1329 221V228H1335" fill="none" stroke="#333"/><path d="M1342 229L1330 240C1329 244 1326 245 1323 245C1326 243 1325 239 1328 238L1340 227Z" fill="#f3f2f1" stroke="#333"/>
<path d="M1238 261H1254L1262 254L1270 261H1419" fill="none" stroke="#8a8886"/>
<path d="M1238 468.500H1419" stroke="#dcdbda"/>

<!-- viz icon grid -->
<g fill="none" stroke="#444" stroke-width="1">
<g transform="translate(1250,273)"><path d="M.5 0V18H18M.5 6H18M.5 12H18"/><rect x="1" y="1" width="7" height="4.500" fill="#3f94d8" stroke="none"/><rect x="1" y="7" width="5" height="4.500" fill="#3f94d8" stroke="none"/><rect x="7" y="13" width="10" height="4.500" fill="#a6a6a6" stroke="none"/></g>
<g transform="translate(1278,273)"><path d="M.5 2V18H18"/><rect x="3" y="8" width="4" height="9" fill="#3f94d8" stroke="none"/><rect x="8" y="3" width="4" height="14" stroke="#444"/><rect x="13" y="3" width="4" height="14" fill="#a6a6a6" stroke="none"/></g>
<g transform="translate(1305,272)"><path d="M.5 0V19H19" stroke-width="2"/><rect x="2" y="1" width="17" height="4" fill="#3f94d8" stroke="#444"/><rect x="2" y="8" width="9" height="4" fill="#a6a6a6" stroke="#444"/><rect x="2" y="14" width="14" height="4" fill="#bbb" stroke="#444"/></g>
<g transform="translate(1333,272)"><path d="M.5 0V19H19" stroke-width="2"/><rect x="3" y="1" width="4" height="17" fill="#3f94d8" stroke="#444"/><rect x="9" y="9" width="4" height="9" fill="#a6a6a6" stroke="#444"/><rect x="14" y="5" width="4" height="13" fill="#bbb" stroke="#444"/></g>
<g transform="translate(1362,273)"><path d="M.5 0V18H18M.5 6H18M.5 12H18"/><rect x="1" y="1" width="16" height="4" fill="#3f94d8" stroke="none"/><rect x="9" y="7" width="8" height="4" fill="#3f94d8" stroke="none"/></g>
<g transform="translate(1390,273)"><path d="M.5 0V18H18"/><rect x="3" y="2" width="5" height="15" fill="#3f94d8" stroke="#444"/><rect x="10" y="2" width="6" height="8" fill="#a6a6a6" stroke="none"/><rect x="10" y="10" width="6" height="7" stroke="#444"/></g>

<g transform="translate(1250,301)"><path d="M.5 0V18H18"/><path d="M1 14L6 8L10 11L17 4M1 10L6 6L11 8L17 7" stroke="#3f94d8"/></g>
<g transform="translate(1278,301)"><path d="M1 18V11L6 6L9 10L13 3L18 12V18Z" fill="#bbb" stroke="#444"/><path d="M1 18V12L7 8L12 13L18 11V18Z" fill="#4fa3e0" stroke="none"/></g>
<g transform="translate(1305,301)"><path d="M.5 0V18H18"/><path d="M1 6L6 11L11 5L18 10V15L11 10L6 16L1 11Z" fill="#4fa3e0" stroke="#2f7dc0"/></g>
<g transform="translate(1333,301)"><path d="M.5 0V18H18"/><path d="M1 1H18V7L11 12L7 8L1 14Z" fill="#4fa3e0" stroke="#2f7dc0"/></g>
<g transform="translate(1362,301)"><path d="M.5 0V18H18"/><rect x="4" y="4" width="4" height="14" fill="#3f94d8" stroke="none"/><rect x="10" y="2" width="4" height="16" fill="#a6a6a6" stroke="none"/><path d="M1 15L6 9L11 14L17 7"/></g>
<g transform="translate(1390,301)"><path d="M.5 0V18H18"/><rect x="3" y="10" width="4" height="8" fill="#3f94d8" stroke="none"/><rect x="8" y="2" width="4" height="16" fill="#a6a6a6" stroke="none"/><path d="M1 15L6 11L11 14L17 7"/></g>

<g transform="translate(1250,329)"><path d="M.5 0V18H18"/><path d="M1 3L7 6L12 3L18 4V9L12 12L7 12L1 9Z" fill="#4c7fb8" stroke="none"/><path d="M1 9L6 15L12 15L18 9V14L12 18L6 18L1 14Z" fill="#e8952f" stroke="none"/></g>
<g transform="translate(1278,329)"><path d="M.5 0V18H18"/><path d="M3 17V8H7V17M7 11H11V17M11 3H15V17" /></g>
<g transform="translate(1306,329)"><rect x="0" y="1" width="18" height="5" fill="#2f8ed4" stroke="none"/><rect x="3" y="7" width="12" height="5" fill="#5caee5" stroke="none"/><rect x="6" y="13" width="6" height="5" fill="#2f8ed4" stroke="none"/></g>
<g transform="translate(1334,329)"><path d="M.5 0V18H18" stroke-dasharray="2 1"/><rect x="4" y="13" width="2" height="2" fill="#444" stroke="none"/><rect x="9" y="9" width="3" height="3" fill="#6eb5e8" stroke="none"/><rect x="6" y="5" width="3" height="3" fill="#6eb5e8" stroke="none"/><rect x="14" y="2" width="2" height="2" fill="#444" stroke="none"/><rect x="14" y="12" width="3" height="3" fill="#6eb5e8" stroke="none"/></g>
<g transform="translate(1362,329)"><circle cx="9" cy="9" r="8.500" fill="#fff" stroke="#333"/><path d="M9 9V.5A8.500 8.500 0 0 1 16 14Z" fill="#8cc4ee" stroke="#333"/></g>
<g transform="translate(1390,329)"><circle cx="9" cy="9" r="6.500" stroke="#3f94d8" stroke-width="4.500"/><path d="M9 2.500A6.500 6.500 0 0 1 15.500 8" stroke="#a6c8e0" stroke-width="4.500"/></g>

<g transform="translate(1250,357)"><rect x="0" y="0" width="9" height="9" fill="#3f94d8" stroke="none"/><rect x="0" y="10" width="9" height="8" fill="#5caee5" stroke="none"/><rect x="9.500" y=".5" width="8" height="17"/><path d="M9.500 8H17.500M13.500 8V17.500"/></g>
<g transform="translate(1279,356)"><circle cx="8" cy="8" r="6.500" fill="#2e8b57" stroke="#444"/><path d="M5 4L9 5L8 9L4 8ZM10 10L13 9L12 13Z" fill="#fff" stroke="none"/><path d="M3 18H13M8 15V18"/></g>
<g transform="translate(1306,357)"><path d="M1 3L8 1L12 4L18 3L17 12L11 17L6 14L2 10Z" fill="#888" stroke="#444"/><path d="M8 10L13 8L17 10L12 16L7 14Z" fill="#3f94d8" stroke="none"/></g>
<g transform="translate(1336,356)"><path d="M9 0L2 19L13 13L16 19Z" fill="#2f8ed4" stroke="none"/></g>
<g transform="translate(1362,358)"><path d="M1 14C1 4 17 4 17 14Z" fill="#fff" stroke="#333"/><path d="M3 10C6 6 11 6 14 9L11 11L6 11Z" fill="#3f94d8" stroke="none"/><path d="M9 14L11 10" stroke="#222" stroke-width="1.500"/></g>
<g transform="translate(1390,357)"><rect x=".5" y="2.500" width="17" height="13" stroke="#666"/><text x="9" y="13" font-size="9" fill="#2f8ed4" stroke="none" text-anchor="middle">123</text></g>

<g transform="translate(1250,385)"><rect x=".5" y=".5" width="17" height="17"/><path d="M4 5H12M4 9H14M4 13H10" stroke="#2f7dc0" stroke-width="1.500"/></g>
<g transform="translate(1278,385)"><rect x=".5" y="2.500" width="17" height="13"/><path d="M3 11L6 6L9 11Z" fill="#3da35e" stroke="none"/><path d="M10 6H15L12.500 11Z" fill="#d9304a" stroke="none"/><path d="M3 14H15" stroke="#aaa"/></g>
<g transform="translate(1306,385)"><path d="M.5 15V.5H17V8" /><rect x="1" y="1" width="16" height="2" fill="#999" stroke="none"/><path d="M3 6h3v3h-3zM3 11h3v3h-3z" /><path d="M9 10H19L15 14V18L13 19V14Z" fill="#f3f2f1"/></g>
<g transform="translate(1334,385)"><rect x=".5" y=".5" width="17" height="17"/><path d="M.5 6H17.500M.5 12H17.500M6 .5V17.500M12 .5V17.500"/></g>
<g transform="translate(1362,385)"><rect x=".5" y=".5" width="17" height="17"/><rect x="1" y="1" width="16" height="4" fill="#777" stroke="none"/><rect x="6" y="6" width="5" height="5" fill="#3f94d8" stroke="none"/><rect x="12" y="6" width="5" height="5" fill="#5caee5" stroke="none"/><rect x="1" y="12" width="5" height="5" fill="#3f94d8" stroke="none"/><rect x="7" y="12" width="10" height="5" fill="#3f94d8" stroke="none"/></g>
<text x="1399" y="400" font-size="15" font-weight="bold" fill="#2f7dc0" stroke="none" text-anchor="middle">R</text>

<text x="1259" y="429" font-size="17" font-weight="bold" fill="#2f8ed4" stroke="none" text-anchor="middle">Py</text>
<g transform="translate(1278,413)"><path d="M.5 0V18H18M.5 6H10M.5 12H10"/><circle cx="15" cy="3" r="2.500" fill="#3f94d8" stroke="none"/><rect x="5" y="8" width="3" height="2" fill="#888" stroke="none"/></g>
<g transform="translate(1306,413)"><rect x="0" y="7" width="5" height="4" fill="#3f94d8" stroke="none"/><path d="M5 9H10M10 3V15M10 3H12M10 9H12M10 15H12" stroke="#2f7dc0"/><rect x="12" y="1" width="6" height="4" fill="#3f94d8" stroke="none"/><rect x="12" y="7" width="6" height="4" fill="#3f94d8" stroke="none"/><rect x="12" y="13" width="6" height="4" fill="#3f94d8" stroke="none"/></g>
<g transform="translate(1334,413)"><path d="M.5 1.500H17.500V12.500H8L4 17V12.500H.5Z" stroke="#2f7dc0" fill="#fff"/></g>
<g transform="translate(1363,413)"><path d="M1 .5H10L15 5.500V18H1Z"/><path d="M4 8H8M4 12H12" stroke="#2f7dc0"/><rect x="3" y="5" width="3" height="2" fill="#2f7dc0" stroke="none"/></g>
<g transform="translate(1390,413)"><path d="M4 1H14V8C14 11 11 13 9 13C7 13 4 11 4 8Z"/><path d="M4 3H1C1 7 2 9 4 9M14 3H17C17 7 16 9 14 9M9 13V16M5 18H13"/><rect x="5" y="2" width="8" height="3" fill="#5caee5" stroke="none"/></g>

<g transform="translate(1250,440)"><path d="M1 .5H10L15 5.500V18H1Z" stroke="#333"/><rect x="3" y="13" width="2" height="4" fill="#222" stroke="none"/><rect x="6.500" y="14" width="2" height="3" fill="#222" stroke="none"/><rect x="10" y="10" width="2" height="7" fill="#222" stroke="none"/></g>
<g transform="translate(1278,441)"><rect x=".5" y="2.500" width="17" height="13" stroke="#666"/><text x="11" y="13" font-size="9" fill="#2f8ed4" stroke="none" text-anchor="middle">123</text><path d="M4 0L1 8H4L2 13L9 5H5L8 0Z" fill="#f6c02c" stroke="#c4781a"/></g>
<g transform="translate(1306,441)"><path d="M.5 15V.5H17V8"/><path d="M9 10H19L15 14V18L13 19V14Z" fill="#f3f2f1"/><path d="M4 0L1 8H4L2 13L9 5H5L8 0Z" fill="#f6c02c" stroke="#c4781a"/></g>
</g>
<g fill="#666"><circle cx="1337" cy="449" r="1"/><circle cx="1343" cy="449" r="1"/><circle cx="1349" cy="449" r="1"/></g>

<text x="1251" y="490" class="vp">Values</text>
<rect x="1243.500" y="499.500" width="169" height="27" fill="#fff" stroke="#bbb" stroke-dasharray="2 2"/>
<text x="1254" y="518" class="vp" textLength="106" lengthAdjust="spacingAndGlyphs">Add data fields here</text>
<text x="1251" y="550" font-size="12" font-weight="bold" fill="#444" textLength="69" lengthAdjust="spacingAndGlyphs">Drill through</text>
<text x="1251" y="575" class="vp">Cross-report</text>
<rect x="1365.500" y="563.500" width="31" height="16" rx="8" fill="none" stroke="#777"/><circle cx="1374" cy="571" r="4" fill="#555"/><text x="1380" y="575" font-size="9.500" fill="#666">Off</text>
<text x="1251" y="602" class="vp">Keep all filters</text>
<rect x="1365" y="590" width="32" height="16" rx="8" fill="#0f7a63"/><text x="1370" y="602" font-size="10" font-weight="bold" fill="#fff">On</text><circle cx="1388" cy="598" r="4" fill="#fff"/>
<rect x="1243.500" y="616.500" width="169" height="25" fill="#fff" stroke="#bbb" stroke-dasharray="2 2"/>
<text x="1252" y="634" class="vp" textLength="150" lengthAdjust="spacingAndGlyphs">Add drill-through fields here</text>

<!-- data pane -->
<text x="1429" y="185" font-size="16" font-weight="bold" fill="#333" textLength="33" lengthAdjust="spacingAndGlyphs">Data</text>
<path d="M1580 173L1586 179L1580 185M1586 173L1592 179L1586 185" fill="none" stroke="#555" stroke-width="1.100"/>
<rect x="1425" y="206" width="170" height="22" rx="3" fill="#fff" stroke="#d0d0d0"/>
<circle cx="1442" cy="216" r="5" fill="none" stroke="#555"/><path d="M1445.500 220L1449 224" stroke="#555"/>
<text x="1458" y="222" font-size="13" fill="#666" textLength="41" lengthAdjust="spacingAndGlyphs">Search</text>
<g>
<use href="#chv" x="1435" y="245" width="8" height="12"/><use href="#tbi" x="1449" y="245" width="13" height="13"/><text x="1467" y="255" class="dl">D-Account</text>
<use href="#chv" x="1435" y="269" width="8" height="12"/><use href="#tbi" x="1449" y="269" width="13" height="13"/><text x="1467" y="279" class="dl" textLength="95" lengthAdjust="spacingAndGlyphs">D-AccountHeader</text>
<use href="#chv" x="1435" y="293" width="8" height="12"/><use href="#tci" x="1449" y="293" width="14" height="14"/><text x="1467" y="303" class="dl" textLength="65" lengthAdjust="spacingAndGlyphs">D-DateTable</text>
<use href="#chv" x="1435" y="317" width="8" height="12"/><use href="#tbi" x="1449" y="317" width="13" height="13"/><text x="1467" y="327" class="dl">D-Product</text>
<use href="#chv" x="1435" y="341" width="8" height="12"/><use href="#tbi" x="1449" y="341" width="13" height="13"/><text x="1467" y="351" class="dl" textLength="76" lengthAdjust="spacingAndGlyphs">D-Salesperson</text>
<use href="#chv" x="1435" y="365" width="8" height="12"/><use href="#tbi" x="1449" y="365" width="13" height="13"/><text x="1467" y="375" class="dl" textLength="119" lengthAdjust="spacingAndGlyphs">DateTable Calculations</text>
<use href="#chv" x="1435" y="389" width="8" height="12"/><use href="#tci" x="1449" y="389" width="14" height="14"/><text x="1467" y="399" class="dl" textLength="75" lengthAdjust="spacingAndGlyphs">Expenses WTF</text>
<use href="#chv" x="1435" y="413" width="8" height="12"/><use href="#tbi" x="1449" y="413" width="13" height="13"/><text x="1467" y="423" class="dl" textLength="58" lengthAdjust="spacingAndGlyphs">F-Expenses</text>
<use href="#chv" x="1435" y="437" width="8" height="12"/><use href="#tbi" x="1449" y="437" width="13" height="13"/><text x="1467" y="447" class="dl" textLength="55" lengthAdjust="spacingAndGlyphs">F-Revenue</text>
<use href="#chv" x="1435" y="461" width="8" height="12"/><use href="#tbi" x="1449" y="461" width="13" height="13"/><text x="1467" y="471" class="dl" textLength="105" lengthAdjust="spacingAndGlyphs">Finance calculations</text>
<use href="#chv" x="1435" y="485" width="8" height="12"/><use href="#tbi" x="1449" y="485" width="13" height="13"/><text x="1467" y="495" class="dl" textLength="58" lengthAdjust="spacingAndGlyphs">Formatting</text>
<use href="#chv" x="1435" y="509" width="8" height="12"/><use href="#tbi" x="1449" y="509" width="13" height="13"/><text x="1467" y="519" class="dl" textLength="93" lengthAdjust="spacingAndGlyphs">Main Calculations</text>
<use href="#chv" x="1435" y="533" width="8" height="12"/><use href="#tci" x="1449" y="533" width="14" height="14"/><text x="1467" y="543" class="dl" textLength="52" lengthAdjust="spacingAndGlyphs">Price WTF</text>
<use href="#chv" x="1435" y="557" width="8" height="12"/><use href="#tci" x="1449" y="557" width="14" height="14"/><text x="1467" y="567" class="dl" textLength="46" lengthAdjust="spacingAndGlyphs">Qty WTF</text>
<use href="#chv" x="1435" y="581" width="8" height="12"/><use href="#tci" x="1449" y="581" width="14" height="14"/><text x="1467" y="591" class="dl" textLength="75" lengthAdjust="spacingAndGlyphs">Unit Cost WTF</text>
<use href="#chv" x="1435" y="605" width="8" height="12"/><use href="#tci" x="1449" y="605" width="14" height="14"/><text x="1467" y="615" class="dl" textLength="43" lengthAdjust="spacingAndGlyphs">vrt table</text>
<use href="#chv" x="1435" y="629" width="8" height="12"/><use href="#tbi" x="1449" y="629" width="13" height="13"/><text x="1467" y="639" class="dl">What If</text>
</g>

<!-- page tabs -->
<rect y="800" width="168" height="35" fill="#f3f2f1"/>
<rect x="168" y="800" width="706" height="35" fill="#fff"/>
<rect x="874" y="800" width="39" height="35" fill="#117865"/>
<path d="M893.500 809V822M887 815.500H900" stroke="#fff" stroke-width="2.500"/>
<path d="M0 835.500H1600" stroke="#dcdbda"/>
<path d="M41 800V835M168.500 800V835M241.500 800V835M332.500 800V835M462.500 800V835M599.500 800V835M717.500 800V835M797.500 800V835" stroke="#dcdbda"/>
<rect x="53" y="808" width="19" height="15" fill="none" stroke="#555" stroke-width="1.200"/><path d="M59 826H66M62.500 823V826" stroke="#555"/>
<rect x="52" y="828" width="23" height="3" rx="1" fill="#117865"/>
<rect x="101" y="805" width="12" height="24" rx="2" fill="none" stroke="#555"/><circle cx="107" cy="825" r="1" fill="#555"/>
<path d="M139 812L135 816L139 820ZM157 812L161 816L157 820Z" fill="#c8c8c8"/>
<text x="205" y="823" class="tb">Home</text><text x="287" y="823" class="tb">Overview</text>
<text x="397" y="823" class="tb" style="font-weight:500;fill:#222" textLength="90" lengthAdjust="spacingAndGlyphs">Product Analysis</text>
<rect x="332" y="831" width="130" height="4" fill="#117865"/>
<text x="531" y="823" class="tb" textLength="96" lengthAdjust="spacingAndGlyphs">Operation Income</text>
<text x="658" y="823" class="tb" textLength="77" lengthAdjust="spacingAndGlyphs">Why happen?</text>
<text x="757" y="823" class="tb">What if</text>
<path d="M809 822L814 818L819 822L814 826" fill="none" stroke="#666"/>
<text x="842" y="823" class="tb">Tooltip</text>

<!-- status bar -->
<rect y="836" width="1600" height="23" fill="#f3f2f1"/>
<text x="4" y="853" font-size="11.500" fill="#555" textLength="60" lengthAdjust="spacingAndGlyphs">Page 3 of 7</text>
<path d="M1388 848H1392" stroke="#555" stroke-width="2"/><path d="M1397 847.500H1497" stroke="#666"/><rect x="1439" y="842" width="4" height="12" fill="#555"/><path d="M1447 845V850" stroke="#666"/><path d="M1503 848H1511M1507 844V852" stroke="#555"/>
<text x="1524" y="852" font-size="11.500" fill="#666" textLength="23" lengthAdjust="spacingAndGlyphs">89%</text>
<path d="M1566 846V842H1570M1578 842H1582V846M1582 850V854H1578M1570 854H1566V850" fill="none" stroke="#555"/><rect x="1566" y="842" width="16" height="12" fill="none" stroke="#aaa"/>

<!-- taskbar -->
<rect y="859" width="1600" height="41" fill="#1c1c1c"/>
<g fill="#fff"><path d="M16 874L23 873V879.500H16ZM24 873L32 871.500V879.500H24ZM16 880.500H23V887L16 886ZM24 880.500H32V888.500L24 887Z"/></g>
<rect x="48.500" y="860.500" width="343" height="39" fill="#353535" stroke="#5a5a5a"/>
<circle cx="70" cy="878" r="5.500" fill="none" stroke="#ddd" stroke-width="1.200"/><path d="M66 882.500L61 888" stroke="#ddd" stroke-width="1.200"/>
<text x="88" y="886" font-size="15" fill="#ddd" textLength="128" lengthAdjust="spacingAndGlyphs">Type here to search</text>
<g fill="none" stroke="#eee"><rect x="410" y="875" width="10" height="10"/><path d="M409 871H421M409 889H421"/><path d="M424 871V889" stroke-dasharray="3 2"/></g>
<!-- edge -->
<circle cx="467" cy="880" r="12" fill="#1c8fd6"/><path d="M457 873C461 866 473 866 477 875C478 880 474 884 468 882C463 880 466 876 470 876C466 874 460 876 459 882Z" fill="#45d17a"/><path d="M460 885C464 890 472 890 476 885L468 882Z" fill="#0f5fae"/>
<!-- mail -->
<path d="M504 876L516 868L528 876V892H504Z" fill="#2ba5e8"/><path d="M504 876L516 884L528 876L516 868Z" fill="#d8f0ff"/>
<!-- gift -->
<rect x="553" y="868" width="24" height="24" rx="3" fill="#fff"/><rect x="557" y="876" width="16" height="3" fill="#b31217"/><rect x="558" y="880" width="14" height="9" fill="#b31217"/><path d="M565 876V889" stroke="#fff" stroke-width="1.500"/><path d="M561 874C559 869 564 870 565 874C566 870 571 869 569 874" fill="none" stroke="#b31217" stroke-width="1.500"/>
<!-- chrome -->
<circle cx="614" cy="880" r="12" fill="#34a853"/><path d="M614 868A12 12 0 0 1 625 875H614A5 5 0 0 0 609 879L604 873A12 12 0 0 1 614 868Z" fill="#ea4335"/><path d="M625 875A12 12 0 0 1 616 892L621 882A5 5 0 0 0 619 876Z" fill="#fbbc05"/><circle cx="614" cy="880" r="5" fill="#4285f4" stroke="#fff" stroke-width="1.500"/>
<!-- pc -->
<path d="M650 877L660 869L673 873L669 885L655 890Z" fill="#b4bcc0"/><path d="M659 868L672 871L669 883L657 881Z" fill="#1d3fa8" stroke="#ddd"/>
<!-- folder -->
<path d="M701 870H711L714 873H725V891H701Z" fill="#f5c542"/><rect x="705" y="882" width="15" height="6" fill="#3f94d8"/>
<path d="M751 873H774V893H751Z" fill="#e8b93a"/><rect x="759" y="867" width="11" height="14" fill="#f0c850"/>
<rect x="643" y="897" width="40" height="3" fill="#6fc387"/><rect x="692" y="897" width="40" height="3" fill="#6fc387"/><rect x="737" y="897" width="48" height="3" fill="#6fc387"/>
<!-- tray -->
<text x="1214" y="883" font-size="12" fill="#ddd" textLength="14" lengthAdjust="spacingAndGlyphs">OL</text>
<rect x="1236" y="877" width="15" height="10" rx="1" fill="#888"/><path d="M1238 880H1249M1238 883H1249M1244 877V874L1249 872" stroke="#ddd" fill="none"/>
<g fill="none" stroke="#ddd"><circle cx="1286" cy="878" r="3"/><path d="M1281 889C1281 883 1291 883 1291 889"/><circle cx="1291" cy="874" r="2.500"/>
<path d="M1317 884L1323 878L1329 884" stroke-width="1.200"/><rect x="1340" y="876" width="14" height="9"/><rect x="1342" y="878" width="7" height="5" fill="#ddd"/><path d="M1354 879V882"/><path d="M1364 878V883H1367L1371 886V875L1367 878ZM1374 877C1376 879 1376 882 1374 884M1377 875C1380 878 1380 883 1377 886"/>
<path d="M1392 888C1392 884 1398 880 1402 873C1404 877 1401 884 1397 884C1394 886 1394 890 1392 890"/>
<rect x="1420" y="873" width="22" height="15"/><path d="M1423 877H1439M1423 880H1439M1426 884H1436" stroke-dasharray="1 1"/></g>
<text x="1465" y="877" font-size="12" fill="#ddd" text-anchor="middle" style='font-family:"DejaVu Sans",sans-serif'>ع</text>
<text x="1465" y="894" font-size="11.500" fill="#ddd" text-anchor="middle">101</text>
<text x="1512" y="875" font-size="11.500" fill="#ddd" text-anchor="middle" style='font-family:"Liberation Sans","DejaVu Sans",sans-serif'>7:29 م</text>
<text x="1515" y="894" font-size="11.500" fill="#ddd" text-anchor="middle" textLength="58" lengthAdjust="spacingAndGlyphs">2024/12/29</text>
<path d="M1559.500 872.500H1575.500V886H1569L1566 889.500V886H1559.500Z" fill="none" stroke="#eee"/>

<!-- watermark -->
<g opacity=".42">
<text x="797" y="851" font-size="62" font-weight="bold" fill="#a8a8a8" text-anchor="middle" style='font-family:"DejaVu Sans",sans-serif'>نفذلي</text>
<circle cx="722" cy="862" r="6" fill="#a8a8a8"/><circle cx="737" cy="862" r="6" fill="#a8a8a8"/>
</g>
<rect x="735" y="859" width="50" height="38" fill="#aaa" opacity=".22"/>
<text x="707" y="893" font-size="36" font-weight="bold" fill="#9a9a9a" textLength="183" lengthAdjust="spacingAndGlyphs">nafezly.com</text>
</svg>
</body></html>
